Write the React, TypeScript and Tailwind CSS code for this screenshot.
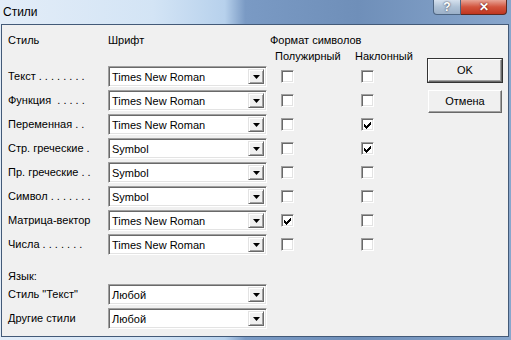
import React from 'react';

const rows = [
  { label: 'Текст . . . . . . . .', font: 'Times New Roman', bold: false, italic: false },
  { label: 'Функция  . . . . .', font: 'Times New Roman', bold: false, italic: false },
  { label: 'Переменная . .', font: 'Times New Roman', bold: false, italic: true },
  { label: 'Стр. греческие .', font: 'Symbol', bold: false, italic: true },
  { label: 'Пр. греческие . .', font: 'Symbol', bold: false, italic: false },
  { label: 'Символ . . . . . . .', font: 'Symbol', bold: false, italic: false },
  { label: 'Матрица-вектор', font: 'Times New Roman', bold: true, italic: false },
  { label: 'Числа . . . . . . .', font: 'Times New Roman', bold: false, italic: false },
];

const Combo = ({ value }: { value: string }) => (
  <div className="flex h-[21px] w-[159px] items-stretch border border-t-[#a0a0a0] border-l-[#a0a0a0] border-b-white border-r-white bg-white shadow-[inset_1px_1px_0_#696969,inset_-1px_-1px_0_#e3e3e3]">
    <div className="flex flex-1 items-center pl-[3px] pt-[1px]">{value}</div>
    <div className="my-[2px] mr-[2px] flex w-[16px] items-center justify-center border border-t-[#e3e3e3] border-l-[#e3e3e3] border-b-[#696969] border-r-[#696969] bg-[#f0f0f0] shadow-[inset_1px_1px_0_#fff,inset_-1px_-1px_0_#a0a0a0]">
      <svg width="7" height="4" viewBox="0 0 7 4">
        <path d="M0 0h7L3.5 4z" fill="#000" />
      </svg>
    </div>
  </div>
);

const Check = ({ on }: { on: boolean }) => (
  <div className="flex h-[13px] w-[13px] items-center justify-center border border-t-[#a0a0a0] border-l-[#a0a0a0] border-b-white border-r-white bg-white shadow-[inset_1px_1px_0_#696969,inset_-1px_-1px_0_#e3e3e3]">
    {on && (
      <svg width="7" height="7" viewBox="0 0 7 7" className="mt-[1px]" shapeRendering="crispEdges">
        <path d="M0 2h1v1h1v1h1v-1h1v-1h1v-1h1v-1h1v3h-1v1h-1v1h-1v1h-1v1h-1v-1h-1v-1h-1z" fill="#000" />
      </svg>
    )}
  </div>
);

const Button = ({ children }: { children: React.ReactNode }) => (
  <div className="flex h-[23px] w-[74px] items-center justify-center border border-t-white border-l-white border-b-[#696969] border-r-[#696969] bg-[#f0f0f0] shadow-[inset_-1px_-1px_0_#a0a0a0]">
    {children}
  </div>
);

export default function App() {
  return (
    <div className="flex h-[340px] w-[511px] flex-col bg-[linear-gradient(90deg,#e3edf8_0%,#d3e4f5_30%,#b7d1ec_44%,#7a9ac4_48%,#6f8fb9_70%,#88a6cc_100%)] text-[11px] text-black [font-family:'Liberation_Sans',Arial,sans-serif]">
      <div className="flex h-[24px] items-start">
        <div className="pl-[3px] pt-[3px] text-[12px]">Стили</div>
        <div className="flex-1" />
        <div className="mr-[4px] flex h-[15px]">
          <div className="flex w-[28px] items-center justify-center rounded-bl-[4px] border border-t-0 border-[#4d6582] bg-[linear-gradient(180deg,#d5e1ee,#aec1d6_50%,#9bb0c8)] text-[12px] font-bold text-white [text-shadow:0_0_2px_#223]">
            ?
          </div>
          <div className="flex w-[46px] items-center justify-center rounded-br-[4px] border border-l-0 border-t-0 border-[#5a2a22] bg-[linear-gradient(180deg,#e8a597,#d2543d_50%,#c0361f)] text-[12px] font-bold text-white [text-shadow:0_0_2px_#400]">
            ✕
          </div>
        </div>
      </div>
      <div className="mb-[3px] ml-[1px] mr-[2px] flex flex-1 border border-[#435a78] bg-[#f0f0f0]">
        <div className="flex w-[425px] flex-col pl-[6px] pt-[7px]">
          <div className="grid h-[16px] grid-cols-[100px_159px_160px] items-center">
            <div>Стиль</div>
            <div>Шрифт</div>
            <div className="pl-[3px]">Формат символов</div>
          </div>
          <div className="grid h-[16px] grid-cols-[100px_159px_80px_80px] items-center">
            <div />
            <div />
            <div className="pl-[8px]">Полужирный</div>
            <div className="pl-[8px]">Наклонный</div>
          </div>
          <div className="mt-[2px] flex flex-col gap-[3px]">
            {rows.map((r) => (
              <div key={r.label} className="grid h-[21px] grid-cols-[100px_159px_80px_80px] items-center">
                <div className="whitespace-pre">{r.label}</div>
                <Combo value={r.font} />
                <div className="pl-[14px]">
                  <Check on={r.bold} />
                </div>
                <div className="pl-[14px]">
                  <Check on={r.italic} />
                </div>
              </div>
            ))}
          </div>
          <div className="mt-[13px] flex h-[16px] items-center">Язык:</div>
          <div className="flex flex-col gap-[3px]">
            <div className="grid h-[21px] grid-cols-[100px_159px] items-center">
              <div>Стиль "Текст"</div>
              <Combo value="Любой" />
            </div>
            <div className="grid h-[21px] grid-cols-[100px_159px] items-center">
              <div>Другие стили</div>
              <Combo value="Любой" />
            </div>
          </div>
        </div>
        <div className="flex flex-col gap-[7px] pt-[33px]">
          <div className="border border-[#333]">
            <Button>OK</Button>
          </div>
          <div className="ml-[1px]">
            <Button>Отмена</Button>
          </div>
        </div>
      </div>
    </div>
  );
}
